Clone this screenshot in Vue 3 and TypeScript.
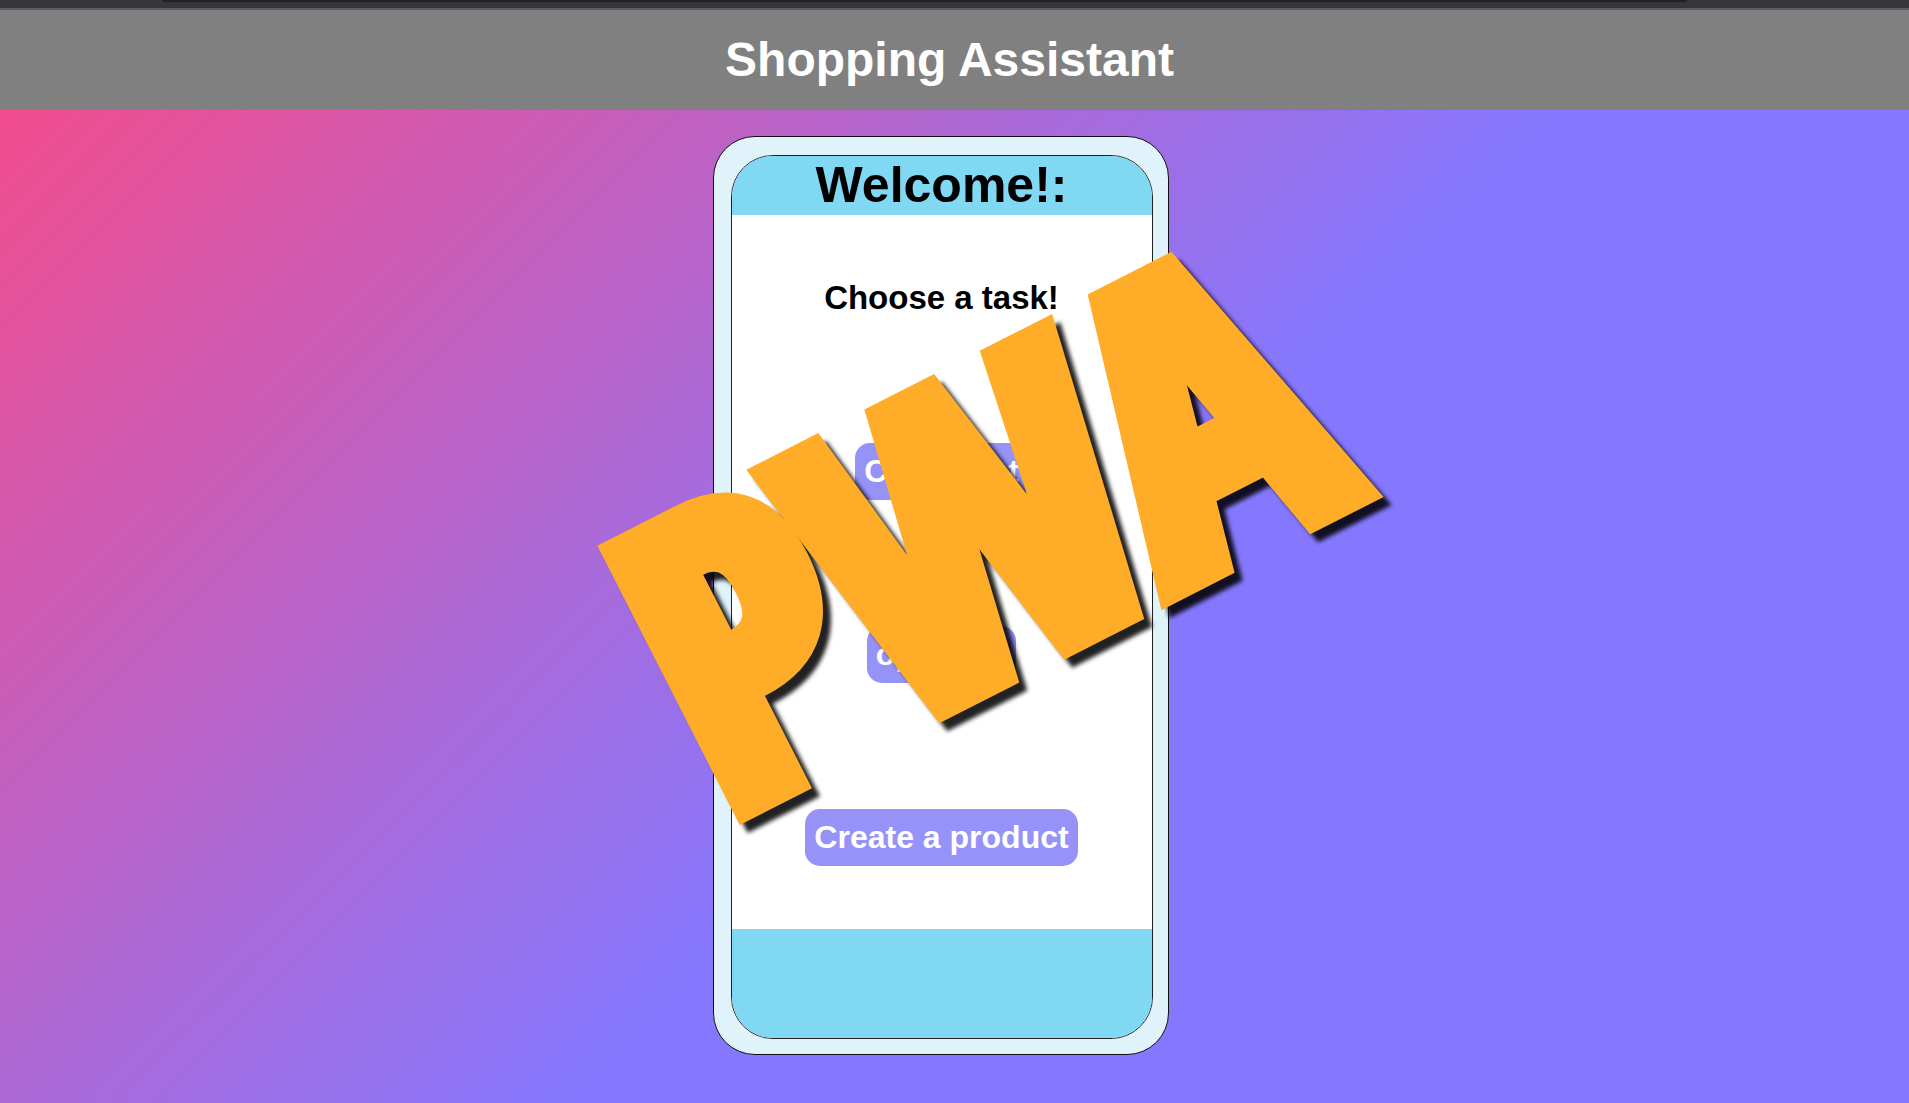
<script setup lang="ts">
const tasks: string[] = ['Create list', 'open list', 'Create a product']
</script>

<template>
  <div class="page">
    <div class="chrome"><div class="omnibox"></div></div>
    <header class="bar"><h1>Shopping Assistant</h1></header>
    <main class="stage">
      <div class="phone">
        <section class="screen">
          <h2 class="welcome">Welcome!:</h2>
          <div class="body">
            <h3 class="prompt">Choose a task!</h3>
            <button v-for="task in tasks" :key="task" type="button" class="task">{{ task }}</button>
          </div>
          <footer class="foot"></footer>
        </section>
        <div class="stamp"><span class="stamp-text">PWA</span></div>
      </div>
    </main>
  </div>
</template>

<style>
body {
  margin: 0;
}
</style>

<style scoped>
.page {
  display: flex;
  flex-direction: column;
  min-height: 100vh;
  overflow: hidden;
  font-family: "Liberation Sans", Arial, sans-serif;
}
.chrome {
  height: 8px;
  background: #35363a;
  border-bottom: 2px solid #5b5d61;
}
.omnibox {
  height: 2px;
  margin: 0 222px 0 162px;
  border-radius: 0 0 8px 8px;
  background: #202124;
}
.bar {
  display: flex;
  align-items: center;
  justify-content: center;
  height: 100px;
  padding-right: 10px;
  background: #808080;
}
h1, h2, h3 {
  margin: 0;
}
h1 {
  font-size: 48px;
  line-height: 56px;
  color: #fff;
}
.stage {
  flex: 1;
  display: flex;
  justify-content: center;
  padding: 26px 28px 48px 0;
  background: linear-gradient(135deg, #f24d8d 0%, #8578ff 54%);
}
.phone {
  position: relative;
  box-sizing: border-box;
  width: 456px;
  padding: 18px 15px 15px 17px;
  border: 1px solid #111;
  border-radius: 42px;
  background: #e0f3fb;
}
.screen {
  display: flex;
  flex-direction: column;
  box-sizing: border-box;
  height: 100%;
  overflow: hidden;
  border: 1px solid #222;
  border-radius: 42px;
  background: #fff;
}
.welcome {
  height: 59px;
  font-size: 50px;
  line-height: 59px;
  text-align: center;
  background: #81d8f3;
}
.body {
  display: flex;
  flex-direction: column;
  align-items: center;
  gap: 126px;
  height: 714px;
  padding-top: 64px;
  box-sizing: border-box;
}
.prompt {
  font-size: 33px;
  line-height: 38px;
}
.task {
  height: 57px;
  padding: 0 9px;
  border: 0;
  border-radius: 15px;
  background: #9593f8;
  color: #fff;
  font: bold 32px/57px "Liberation Sans", Arial, sans-serif;
}
.foot {
  flex: 1;
  background: #81d8f3;
}
.stamp {
  position: absolute;
  left: 258px;
  top: 380px;
  transform: translate(-50%, -50%);
  filter: drop-shadow(8px 8px 2px rgba(0, 0, 0, 0.87));
  pointer-events: none;
}
.stamp-text {
  display: block;
  transform: rotate(-27deg);
  font: 900 400px/400px "Open Sans Condensed", "Liberation Sans Narrow", sans-serif;
  color: #ffac28;
  -webkit-text-stroke: 28px #ffac28;
}
</style>
